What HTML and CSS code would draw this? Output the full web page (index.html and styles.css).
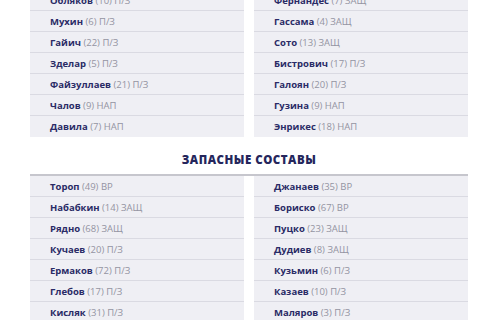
FILE: index.html
```html
<!DOCTYPE html>
<html lang="ru">
<head>
<meta charset="utf-8">
<link rel="stylesheet" href="styles.css">
</head>
<body>
<div class="page">
  <div class="lineup first">
    <ul class="col">
      <li><b>Обляков</b> (10) П/З</li>
      <li><b>Мухин</b> (6) П/З</li>
      <li><b>Гайич</b> (22) П/З</li>
      <li><b>Зделар</b> (5) П/З</li>
      <li><b>Файзуллаев</b> (21) П/З</li>
      <li><b>Чалов</b> (9) НАП</li>
      <li><b>Давила</b> (7) НАП</li>
    </ul>
    <ul class="col">
      <li><b>Фернандес</b> (7) ЗАЩ</li>
      <li><b>Гассама</b> (4) ЗАЩ</li>
      <li><b>Сото</b> (13) ЗАЩ</li>
      <li><b>Бистрович</b> (17) П/З</li>
      <li><b>Галоян</b> (20) П/З</li>
      <li><b>Гузина</b> (9) НАП</li>
      <li><b>Энрикес</b> (18) НАП</li>
    </ul>
  </div>
  <h2 class="title">Запасные составы</h2>
  <div class="lineup second">
    <ul class="col">
      <li><b>Тороп</b> (49) ВР</li>
      <li><b>Набабкин</b> (14) ЗАЩ</li>
      <li><b>Рядно</b> (68) ЗАЩ</li>
      <li><b>Кучаев</b> (20) П/З</li>
      <li><b>Ермаков</b> (72) П/З</li>
      <li><b>Глебов</b> (17) П/З</li>
      <li><b>Кисляк</b> (31) П/З</li>
    </ul>
    <ul class="col">
      <li><b>Джанаев</b> (35) ВР</li>
      <li><b>Бориско</b> (67) ВР</li>
      <li><b>Пуцко</b> (23) ЗАЩ</li>
      <li><b>Дудиев</b> (8) ЗАЩ</li>
      <li><b>Кузьмин</b> (6) П/З</li>
      <li><b>Казаев</b> (10) П/З</li>
      <li><b>Маляров</b> (3) П/З</li>
    </ul>
  </div>
</div>
</body>
</html>
```
FILE: styles.css
```css
html, body {
  margin: 0;
  padding: 0;
  background: #ffffff;
}
body {
  font-family: "Open Sans", "Noto Sans", sans-serif;
  overflow: hidden;
}
.page {
  width: 438px;
  padding-left: 30px;
  margin-top: -10px;
}
.lineup {
  display: grid;
  grid-template-columns: 214px 214px;
  column-gap: 10px;
}
.second {
  border-top: 2px solid #c6c6cd;
}
.col {
  list-style: none;
  margin: 0;
  padding: 0;
  background: #efeff4;
}
.col li {
  height: 20px;
  line-height: 21px;
  border-bottom: 1px solid #dadae2;
  padding-left: 20px;
  font-size: 9.5px;
  color: #9494a2;
  white-space: nowrap;
}
.col li:last-child {
  border-bottom: none;
  height: 21px;
}
.col li b {
  color: #2a2b66;
  font-weight: 700;
}
.title {
  margin: 0;
  height: 37px;
  display: flex;
  align-items: center;
  justify-content: center;
  font-size: 11.5px;
  font-weight: 800;
  text-transform: uppercase;
  color: #25265c;
  letter-spacing: 0.5px;
  padding-top: 8px;
  box-sizing: border-box;
}
```
